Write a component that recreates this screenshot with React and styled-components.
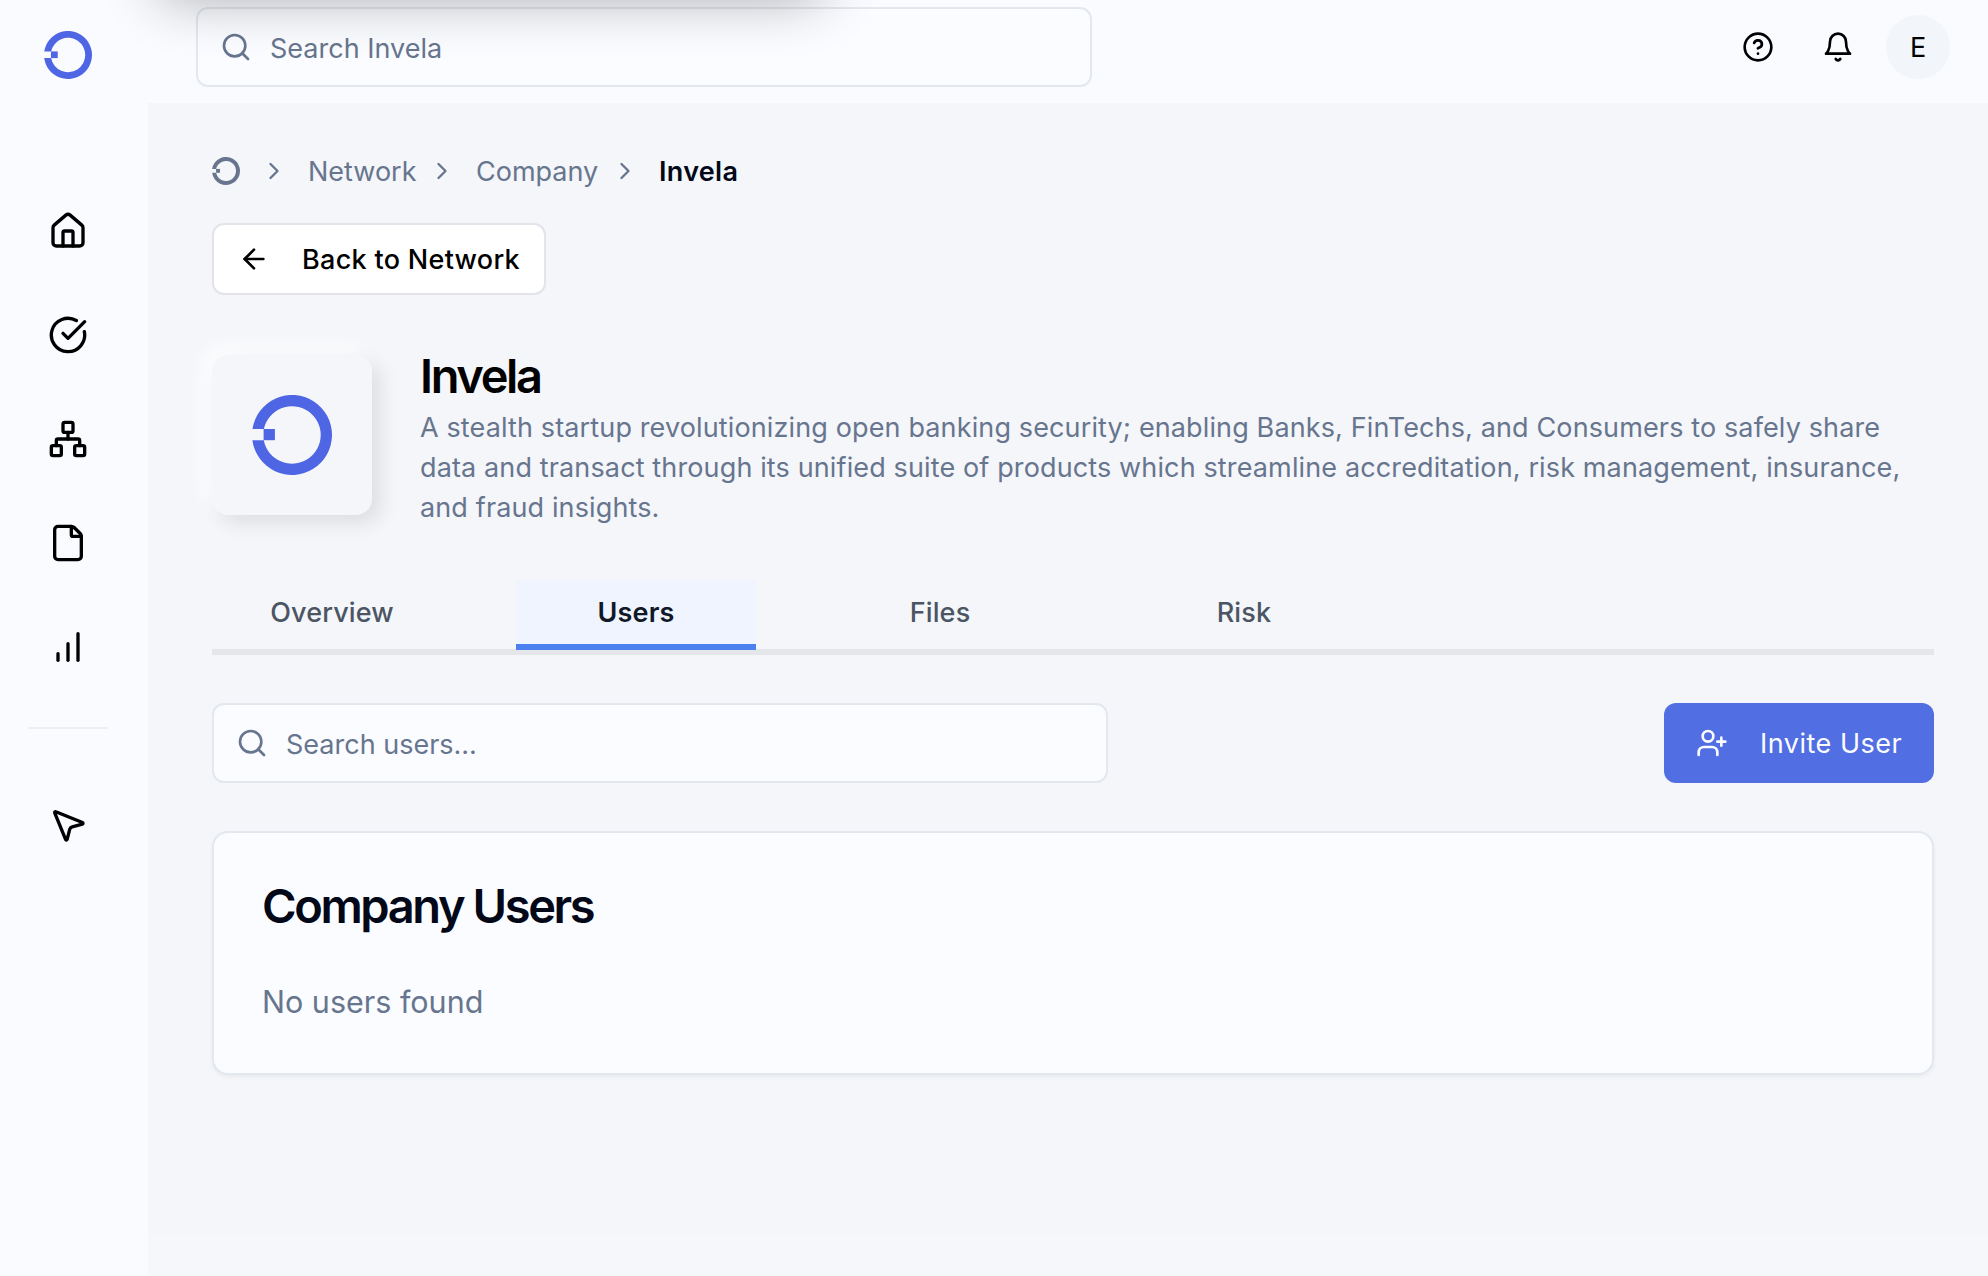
import React from "react";
import styled, { createGlobalStyle } from "styled-components";
import {
  House,
  CircleCheckBig,
  Network,
  File,
  MousePointer2,
  Search,
  CircleQuestionMark,
  ChevronRight,
  ArrowLeft,
  UserPlus,
} from "lucide-react";

const GlobalStyle = createGlobalStyle`
  *, *::before, *::after { box-sizing: border-box; }
  body {
    margin: 0;
    background: #f4f6fa;
    font-family: Inter, "Liberation Sans", sans-serif;
    font-size: 27px;
    line-height: 40px;
    color: #020817;
    overflow: hidden;
  }
  h1, h2, p { margin: 0; }
  button, input { font: inherit; color: inherit; }
  svg { display: block; flex: none; }
`;

const Shell = styled.div`
  display: flex;
  width: 1988px;
  height: 1276px;
  position: relative;
  overflow: hidden;
`;

const WindowShadow = styled.div`
  position: absolute;
  top: -204px;
  left: 160px;
  width: 662px;
  height: 200px;
  border-radius: 12px;
  box-shadow: 0 2px 56px rgba(0, 0, 0, 0.32);
  pointer-events: none;
`;

const Sidebar = styled.aside`
  width: 148px;
  flex: none;
  padding: 31px 12px 0 0;
  background: #f9fbff;
  display: flex;
  flex-direction: column;
  align-items: center;
`;

const Nav = styled.nav`
  display: flex;
  flex-direction: column;
  align-items: center;
  margin-top: 100px;
`;

const NavItem = styled.a`
  height: 104px;
  width: 80px;
  display: flex;
  align-items: center;
  justify-content: center;
  color: #000;
`;

const NavDivider = styled.hr`
  width: 80px;
  height: 2px;
  margin: 28px 0 44px;
  border: 0;
  background: #eeeff4;
`;

const Column = styled.div`
  flex: 1;
  display: flex;
  flex-direction: column;
`;

const Header = styled.header`
  height: 103px;
  padding: 7px 38px 16px 48px;
  background: #f9fbff;
  display: flex;
  justify-content: space-between;
`;

const SearchBox = styled.label`
  width: 896px;
  height: 80px;
  padding: 0 22px;
  border: 2px solid #e2e8ee;
  border-radius: 12px;
  background: #fafcff;
  display: flex;
  align-items: center;
  gap: 18px;
  color: #67758e;
`;

const SearchInput = styled.input`
  flex: 1;
  min-width: 0;
  padding: 3px 0 0;
  border: 0;
  outline: 0;
  background: transparent;
  &::placeholder { color: #67758e; opacity: 1; }
`;

const HeaderActions = styled.div`
  display: flex;
  align-items: center;
  height: 80px;
  gap: 48px;
`;

const Avatar = styled.div`
  width: 64px;
  height: 64px;
  margin-left: -16px;
  padding-top: 1px;
  border-radius: 50%;
  background: #f2f5f9;
  color: #000;
  display: flex;
  align-items: center;
  justify-content: center;
`;

const Main = styled.main`
  flex: 1;
  padding: 48px 54px 0 64px;
  display: flex;
  flex-direction: column;
  align-items: stretch;
`;

const FooterStrip = styled.footer`
  height: 41px;
  background: #f6f7fb;
`;

const Breadcrumb = styled.nav`
  display: flex;
  align-items: center;
  height: 40px;
  color: #67758e;
`;

const Crumb = styled.span`
  width: ${(p) => p.$width}px;
  padding-top: 2px;
  white-space: nowrap;
  letter-spacing: ${(p) => (p.$current ? "0.3px" : "0")};
  color: ${(p) => (p.$current ? "#020817" : "#67758e")};
  font-weight: ${(p) => (p.$current ? 600 : 400)};
`;

const CrumbSeparator = styled(ChevronRight)`
  margin: 0 ${(p) => p.$after}px 0 ${(p) => p.$before}px;
`;

const ButtonLabel = styled.span`
  padding-top: 2px;
`;

const BackButton = styled.button`
  align-self: flex-start;
  width: 334px;
  height: 72px;
  margin-top: 32px;
  padding: 0 0 0 24px;
  border: 2px solid #e3e4e9;
  border-radius: 12px;
  background: #fff;
  color: #000;
  font-weight: 500;
  letter-spacing: 0.3px;
  display: flex;
  align-items: center;
  gap: 32px;
  white-space: nowrap;
`;

const Company = styled.section`
  display: flex;
  gap: 48px;
  height: 172px;
  margin-top: 60px;
`;

const LogoTile = styled.div`
  width: 160px;
  height: 160px;
  flex: none;
  border-radius: 16px;
  background: #f5f6fa;
  box-shadow: 8px 8px 20px rgba(0, 0, 0, 0.1), -8px -8px 20px rgba(255, 255, 255, 0.9);
  display: flex;
  align-items: center;
  justify-content: center;
`;

const CompanyText = styled.div`
  flex: 1;
`;

const CompanyName = styled.h1`
  height: 52.5px;
  line-height: 41px;
  font-size: 47px;
  font-weight: 600;
  letter-spacing: -2.35px;
  color: #000;
`;

const Description = styled.p`
  color: #67758e;
  letter-spacing: 0.13px;
`;

const Tabs = styled.div`
  display: flex;
  gap: 64px;
  height: 75px;
  margin-top: 53px;
  border-bottom: 6px solid #e5e6ea;
`;

const Tab = styled.button`
  width: 240px;
  height: 70px;
  padding: 13px 0 0;
  border: 0;
  border-bottom: 6px solid ${(p) => (p.$active ? "#4b80ee" : "transparent")};
  background: ${(p) => (p.$active ? "#eff4ff" : "transparent")};
  color: ${(p) => (p.$active ? "#111827" : "#4b5563")};
  font-weight: ${(p) => (p.$active ? 600 : 500)};
  letter-spacing: 0.15px;
  display: flex;
  justify-content: center;
`;

const Toolbar = styled.div`
  display: flex;
  justify-content: space-between;
  margin-top: 48px;
`;

const InviteButton = styled.button`
  width: 270px;
  height: 80px;
  padding: 0 0 0 32px;
  border: 0;
  border-radius: 12px;
  background: #526ee3;
  color: #fafcff;
  letter-spacing: 0.5px;
  display: flex;
  align-items: center;
  gap: 32px;
  white-space: nowrap;
`;

const Card = styled.section`
  height: 244px;
  margin-top: 48px;
  padding: 48px;
  border: 2px solid #e2e8ee;
  border-radius: 16px;
  background: #fafcff;
  box-shadow: 0 2px 4px rgba(0, 0, 0, 0.05);
`;

const CardTitle = styled.h2`
  height: 48px;
  line-height: 49px;
  font-size: 47px;
  font-weight: 600;
  letter-spacing: -2.4px;
`;

const EmptyText = styled.p`
  margin-top: 48px;
  font-size: 30.5px;
  line-height: 49px;
  color: #67758e;
`;

function LogoMark({ size, color }) {
  return (
    <svg width={size} height={size} viewBox="0 0 80 80" fill={color}>
      <path d="M0.45 34A40 40 0 1 1 0.35 45.2H11.8A28.7 28.7 0 1 0 11.93 34Z" />
      <path d="M11.6 34H22.9V45.2H11.6Z" />
    </svg>
  );
}

function StrokeIcon({ size, children }) {
  return (
    <svg
      width={size}
      height={size}
      viewBox="0 0 24 24"
      fill="none"
      stroke="#000"
      strokeWidth="2"
      strokeLinecap="round"
      strokeLinejoin="round"
    >
      {children}
    </svg>
  );
}

function BellIcon({ size }) {
  return (
    <StrokeIcon size={size}>
      <path d="M6 8a6 6 0 0 1 12 0c0 7 3 9 3 9H3s3-2 3-9" />
      <path d="M10.3 21a1.94 1.94 0 0 0 3.4 0" />
    </StrokeIcon>
  );
}

function BarsIcon({ size }) {
  return (
    <StrokeIcon size={size}>
      <path d="M12 20V10" />
      <path d="M18 20V4" />
      <path d="M6 20v-4" />
    </StrokeIcon>
  );
}

const NAV_ICONS = [House, CircleCheckBig, Network, File, BarsIcon];
const TABS = ["Overview", "Users", "Files", "Risk"];

export default function App() {
  return (
    <>
      <GlobalStyle />
      <Shell>
        <Sidebar>
          <LogoMark size={48} color="#4f66e4" />
          <Nav>
            {NAV_ICONS.map((Icon, i) => (
              <NavItem key={i}>
                <Icon size={40} />
              </NavItem>
            ))}
            <NavDivider />
            <NavItem>
              <MousePointer2 size={40} />
            </NavItem>
          </Nav>
        </Sidebar>
        <Column>
          <Header>
            <SearchBox>
              <Search size={32} />
              <SearchInput placeholder="Search Invela" />
            </SearchBox>
            <HeaderActions>
              <CircleQuestionMark size={32} color="#000" />
              <BellIcon size={32} />
              <Avatar>E</Avatar>
            </HeaderActions>
          </Header>
          <Main>
            <Breadcrumb>
              <LogoMark size={28} color="#67758e" />
              <CrumbSeparator size={28} $before={20} $after={20} />
              <Crumb $width={108}>Network</Crumb>
              <CrumbSeparator size={28} $before={12} $after={20} />
              <Crumb $width={122}>Company</Crumb>
              <CrumbSeparator size={28} $before={13} $after={20} />
              <Crumb $current>Invela</Crumb>
            </Breadcrumb>
            <BackButton>
              <ArrowLeft size={32} />
              <ButtonLabel>Back to Network</ButtonLabel>
            </BackButton>
            <Company>
              <LogoTile>
                <LogoMark size={80} color="#4f66e4" />
              </LogoTile>
              <CompanyText>
                <CompanyName>Invela</CompanyName>
                <Description>
                  A stealth startup revolutionizing open banking security; enabling Banks,
                  FinTechs, and Consumers to safely share data and transact through its unified
                  suite of products which streamline accreditation, risk management, insurance,
                  and fraud insights.
                </Description>
              </CompanyText>
            </Company>
            <Tabs>
              {TABS.map((name) => (
                <Tab key={name} $active={name === "Users"}>
                  {name}
                </Tab>
              ))}
            </Tabs>
            <Toolbar>
              <SearchBox>
                <Search size={32} />
                <SearchInput placeholder="Search users..." />
              </SearchBox>
              <InviteButton>
                <UserPlus size={32} />
                <ButtonLabel>Invite User</ButtonLabel>
              </InviteButton>
            </Toolbar>
            <Card>
              <CardTitle>Company Users</CardTitle>
              <EmptyText>No users found</EmptyText>
            </Card>
          </Main>
          <FooterStrip />
        </Column>
        <WindowShadow />
      </Shell>
    </>
  );
}
